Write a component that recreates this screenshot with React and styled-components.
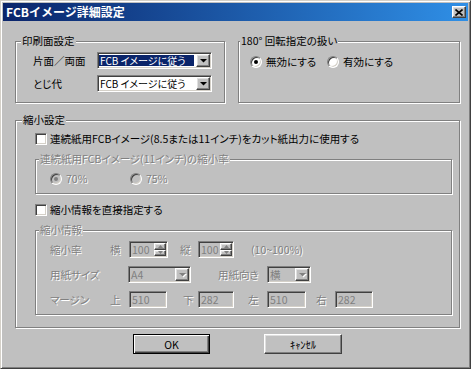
import React from 'react'
import styled, { createGlobalStyle } from 'styled-components'

const GlobalStyle = createGlobalStyle`
  body {
    margin: 0;
    background: #ffffff;
    font-family: "Noto Sans CJK JP", "Noto Sans", sans-serif;
    font-size: 10.5px;
    font-feature-settings: "palt";
  }
`

const raised = `
  border: 1px solid;
  border-color: #ffffff #404040 #404040 #ffffff;
  box-shadow: inset -1px -1px #808080, inset 1px 1px #dfdfdf;
`
const sunken = `
  border: 1px solid;
  border-color: #808080 #ffffff #ffffff #808080;
  box-shadow: inset 1px 1px #404040, inset -1px -1px #d4d0c8;
`

const Window = styled.div`
  box-sizing: border-box;
  width: 471px;
  height: 369px;
  padding: 2px;
  display: flex;
  flex-direction: column;
  background: #c0c0c0;
  border: 1px solid;
  border-color: #d4d0c8 #404040 #404040 #d4d0c8;
  box-shadow: inset 1px 1px #ffffff, inset -1px -1px #808080;
`
const TitleBar = styled.div`
  height: 18px;
  flex: none;
  display: flex;
  align-items: center;
  justify-content: space-between;
  padding: 0 2px 0 3px;
  background: linear-gradient(to right, #0a246a, #2f8fe6);
`
const Title = styled.span`
  color: #ffffff;
  font-weight: bold;
  font-size: 12px;
  line-height: 14px;
  font-feature-settings: normal;
`
const CloseButton = styled.div`
  box-sizing: border-box;
  width: 14px;
  height: 12px;
  background: #c0c0c0;
  display: flex;
  align-items: center;
  justify-content: center;
  ${raised}
`
const Body = styled.div`
  display: flex;
  flex-direction: column;
  padding: 20px 8px 0 12px;
`
const TopRow = styled.div`
  display: flex;
  gap: 13px;
`
const GroupBox = styled.div`
  box-sizing: border-box;
  margin-top: ${p => p.$mt || 0}px;
  width: ${p => p.$w}px;
  ${p => p.$h ? `height: ${p.$h}px;` : ''}
  display: flex;
  flex-direction: column;
  border: 1px solid #808080;
  box-shadow: inset 1px 1px #ffffff, 1px 1px #ffffff;
`
const Legend = styled.span`
  align-self: flex-start;
  margin: -7px 0 0 ${p => p.$lx}px;
  padding: 0 1px;
  line-height: 12px;
  white-space: nowrap;
  background: #c0c0c0;
  color: ${p => p.$disabled ? '#808080' : '#000000'};
  ${p => p.$disabled ? 'text-shadow: 1px 1px 0 #ffffff;' : ''}
`
const GroupContent = styled.div`
  padding: ${p => p.$pad};
`
const Stack = styled.div`
  display: flex;
  flex-direction: column;
  gap: ${p => p.$gap || 0}px;
`
const Row = styled.div`
  display: flex;
  align-items: center;
  height: ${p => p.$h || 17}px;
`
const Label = styled.span`
  flex: none;
  width: ${p => p.$w ? `${p.$w}px` : 'auto'};
  margin-left: ${p => p.$ml || 0}px;
  line-height: 13px;
  white-space: nowrap;
  color: ${p => p.$disabled ? '#808080' : '#000000'};
  ${p => p.$disabled ? 'text-shadow: 1px 1px 0 #ffffff;' : ''}
`
const Field = styled.div`
  box-sizing: border-box;
  flex: none;
  width: ${p => p.$w}px;
  height: 17px;
  margin-left: ${p => p.$ml || 0}px;
  padding: 1px;
  display: flex;
  align-items: center;
  background: ${p => p.$disabled ? '#c0c0c0' : '#ffffff'};
  ${sunken}
`
const FieldText = styled.span`
  flex: 1;
  min-width: 0;
  align-self: ${p => p.$selected ? 'center' : 'stretch'};
  padding-left: 1px;
  margin-right: ${p => p.$selected ? 2 : 0}px;
  font-size: ${p => p.$tight ? '10px' : 'inherit'};
  line-height: ${p => p.$selected ? 11 : 13}px;
  white-space: nowrap;
  background: ${p => p.$selected ? '#0a246a' : 'transparent'};
  color: ${p => p.$selected ? '#ffffff' : p.$disabled ? '#808080' : '#000000'};
`
const DropButton = styled.div`
  box-sizing: border-box;
  flex: none;
  width: 14px;
  height: 13px;
  display: flex;
  align-items: center;
  justify-content: center;
  background: #c0c0c0;
  ${raised}
`
const SpinColumn = styled.div`
  flex: none;
  align-self: stretch;
  width: 12px;
  display: flex;
  flex-direction: column;
`
const SpinButton = styled.div`
  box-sizing: border-box;
  flex: 1;
  display: flex;
  align-items: center;
  justify-content: center;
  background: #c0c0c0;
  ${raised}
`
const RadioItem = styled.div`
  display: flex;
  align-items: center;
  gap: 4px;
  width: ${p => p.$w ? `${p.$w}px` : 'auto'};
`
const RadioCircle = styled.span`
  box-sizing: border-box;
  width: 12px;
  height: 12px;
  border-radius: 50%;
  display: flex;
  align-items: center;
  justify-content: center;
  background: ${p => p.$disabled ? '#c0c0c0' : '#ffffff'};
  ${sunken}
`
const RadioDot = styled.span`
  width: 4px;
  height: 4px;
  border-radius: 50%;
  background: ${p => p.$disabled ? '#808080' : '#000000'};
`
const CheckItem = styled.div`
  display: flex;
  align-items: center;
  gap: 3px;
  height: 13px;
`
const CheckBox = styled.span`
  box-sizing: border-box;
  width: 12px;
  height: 12px;
  background: #ffffff;
  ${sunken}
`
const Spacer = styled.div`
  height: ${p => p.$h}px;
`
const ButtonRow = styled.div`
  display: flex;
  justify-content: center;
  gap: 54px;
  margin-top: 6px;
`
const PushButton = styled.div`
  box-sizing: border-box;
  width: ${p => p.$w}px;
  height: 20px;
  display: flex;
  align-items: center;
  justify-content: center;
  background: #c0c0c0;
  ${p => p.$default
    ? `border: 1px solid #000000;
       box-shadow: inset 1px 1px #ffffff, inset -1px -1px #404040, inset -2px -2px #808080;`
    : raised}
`

const Arrow = ({ disabled }) => (
  <svg width='7' height='4' viewBox='0 0 7 4' style={{ overflow: 'visible' }}>
    {disabled && <path d='M1 1 L8 1 L4.5 4.5 Z' fill='#ffffff' />}
    <path d='M0 0 L7 0 L3.5 3.5 Z' fill={disabled ? '#808080' : '#000000'} />
  </svg>
)

const Combo = ({ w, text, selected, disabled, tight }) => (
  <Field $w={w} $disabled={disabled}>
    <FieldText $selected={selected} $disabled={disabled} $tight={tight}>{text}</FieldText>
    <DropButton><Arrow disabled={disabled} /></DropButton>
  </Field>
)

const Spin = ({ w, text }) => (
  <Field $w={w} $disabled>
    <FieldText $disabled>{text}</FieldText>
    <SpinColumn>
      <SpinButton><svg width='5' height='3' viewBox='0 0 5 3'><path d='M0 3 L5 3 L2.5 0 Z' fill='#808080' /></svg></SpinButton>
      <SpinButton><svg width='5' height='3' viewBox='0 0 5 3'><path d='M0 0 L5 0 L2.5 3 Z' fill='#808080' /></svg></SpinButton>
    </SpinColumn>
  </Field>
)

const Radio = ({ w, checked, disabled, children }) => (
  <RadioItem $w={w}>
    <RadioCircle $disabled={disabled}>{checked && <RadioDot $disabled={disabled} />}</RadioCircle>
    <Label $disabled={disabled}>{children}</Label>
  </RadioItem>
)

const Check = ({ children }) => (
  <CheckItem>
    <CheckBox />
    <Label>{children}</Label>
  </CheckItem>
)

const App = () => (
  <>
    <GlobalStyle />
    <Window>
      <TitleBar>
        <Title>FCBイメージ詳細設定</Title>
        <CloseButton>
          <svg width='8' height='7' viewBox='0 0 8 7'>
            <path d='M0.5 0.5 L7.5 6.5 M7.5 0.5 L0.5 6.5' stroke='#000000' strokeWidth='1.6' />
          </svg>
        </CloseButton>
      </TitleBar>
      <Body>
        <TopRow>
          <GroupBox $w={210} $h={62}>
            <Legend $lx={5}>印刷面設定</Legend>
            <GroupContent $pad='5px 0 0 17px'>
              <Stack $gap={6}>
                <Row>
                  <Label $w={64}>片面／両面</Label>
                  <Combo w={115} text='FCB イメージに従う' selected tight />
                </Row>
                <Row>
                  <Label $w={64}>とじ代</Label>
                  <Combo w={115} text='FCB イメージに従う' tight />
                </Row>
              </Stack>
            </GroupContent>
          </GroupBox>
          <GroupBox $w={222} $h={62}>
            <Legend $lx={1}>180° 回転指定の扱い</Legend>
            <GroupContent $pad='8px 0 0 11px'>
              <Row $h={13}>
                <Radio w={77} checked>無効にする</Radio>
                <Radio>有効にする</Radio>
              </Row>
            </GroupContent>
          </GroupBox>
        </TopRow>
        <GroupBox $w={445} $mt={17}>
          <Legend $lx={6}>縮小設定</Legend>
          <GroupContent $pad='6px 9px 12px 19px'>
            <Check>連続紙用FCBイメージ(8.5または11インチ)をカット紙出力に使用する</Check>
            <GroupBox $w={417} $mt={14}>
              <Legend $lx={3} $disabled>連続紙用FCBイメージ(11インチ)の縮小率</Legend>
              <GroupContent $pad='7px 0 8px 14px'>
                <Row $h={13}>
                  <Radio w={80} checked disabled>70%</Radio>
                  <Radio disabled>75%</Radio>
                </Row>
              </GroupContent>
            </GroupBox>
            <Spacer $h={9} />
            <Check>縮小情報を直接指定する</Check>
            <GroupBox $w={417} $mt={14}>
              <Legend $lx={3} $disabled>縮小情報</Legend>
              <GroupContent $pad='5px 0 6px 14px'>
                <Stack $gap={8}>
                  <Row>
                    <Label $w={60} $disabled>縮小率</Label>
                    <Label $w={19} $disabled>横</Label>
                    <Spin w={39} text='100' />
                    <Label $w={18} $ml={12} $disabled>縦</Label>
                    <Spin w={36} text='100' />
                    <Label $ml={17} $disabled>(10~100%)</Label>
                  </Row>
                  <Row>
                    <Label $w={78} $disabled>用紙サイズ</Label>
                    <Combo w={63} text='A4' disabled />
                    <Label $w={49} $ml={27} $disabled>用紙向き</Label>
                    <Combo w={44} text='横' disabled />
                  </Row>
                  <Row>
                    <Label $w={60} $disabled>マージン</Label>
                    <Label $w={19} $disabled>上</Label>
                    <Field $w={38} $disabled><FieldText $disabled>510</FieldText></Field>
                    <Label $w={15} $ml={16} $disabled>下</Label>
                    <Field $w={36} $disabled><FieldText $disabled>282</FieldText></Field>
                    <Label $w={19} $ml={14} $disabled>左</Label>
                    <Field $w={39} $disabled><FieldText $disabled>510</FieldText></Field>
                    <Label $w={19} $ml={10} $disabled>右</Label>
                    <Field $w={38} $disabled><FieldText $disabled>282</FieldText></Field>
                  </Row>
                </Stack>
              </GroupContent>
            </GroupBox>
          </GroupContent>
        </GroupBox>
        <ButtonRow>
          <PushButton $w={77} $default>OK</PushButton>
          <PushButton $w={78}>ｷｬﾝｾﾙ</PushButton>
        </ButtonRow>
      </Body>
    </Window>
  </>
)

export default App
